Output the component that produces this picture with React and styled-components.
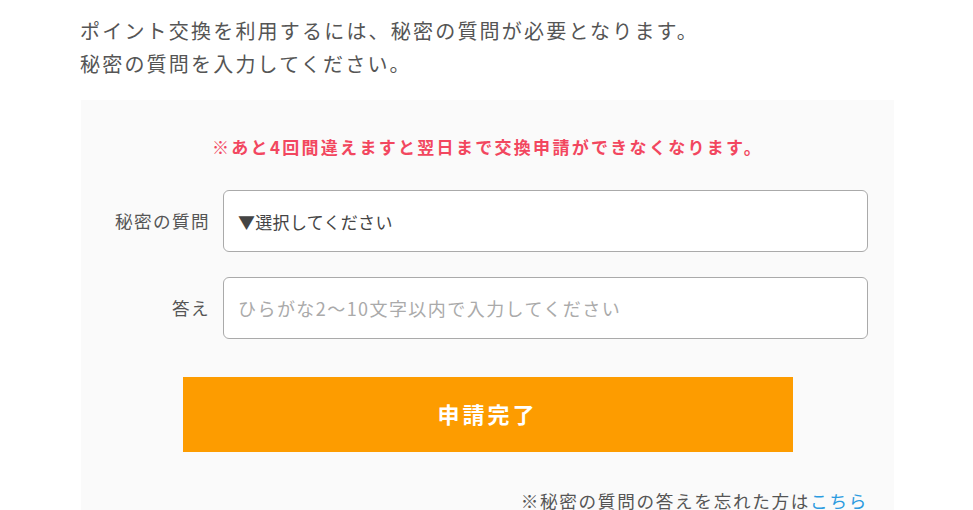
import React, { useState } from 'react';
import styled, { createGlobalStyle } from 'styled-components';

const GlobalStyle = createGlobalStyle`
  body {
    margin: 0;
    background: #fff;
    color: #555;
    font-family: "Noto Sans CJK JP", "Noto Sans", sans-serif;
    letter-spacing: 0.08em;
  }
`;

const questions = [
  '母親の旧姓は？',
  '初めて飼ったペットの名前は？',
  '卒業した小学校の名前は？',
  '好きな食べ物は？',
];

const SecretQuestion = () => {
  const [question, setQuestion] = useState('');
  const [answer, setAnswer] = useState('');

  return (
    <Content>
      <Intro>
        ポイント交換を利用するには、秘密の質問が必要となります。
        <br />
        秘密の質問を入力してください。
      </Intro>
      <Panel>
        <Warning>※あと4回間違えますと翌日まで交換申請ができなくなります。</Warning>
        <Row>
          <Label htmlFor="question">秘密の質問</Label>
          <Select
            id="question"
            value={question}
            onChange={(e) => setQuestion(e.target.value)}
          >
            <option value="">▼選択してください</option>
            {questions.map((q) => (
              <option key={q} value={q}>{q}</option>
            ))}
          </Select>
        </Row>
        <Row>
          <Label htmlFor="answer">答え</Label>
          <Input
            id="answer"
            type="text"
            placeholder="ひらがな2～10文字以内で入力してください"
            value={answer}
            onChange={(e) => setAnswer(e.target.value)}
          />
        </Row>
        <Button type="button">申請完了</Button>
        <Note>
          ※秘密の質問の答えを忘れた方は<Link href="#">こちら</Link>
        </Note>
      </Panel>
    </Content>
  );
};

const Content = styled.div`
  width: 813px;
  margin-left: 81px;
  padding-top: 14px;
`;

const Intro = styled.p`
  margin: 0 0 20px -1px;
  font-size: 20px;
  line-height: 33px;
  letter-spacing: 2.2px;
`;

const Panel = styled.div`
  background: #fafafa;
  padding: 34px 26px 20px;
  display: flex;
  flex-direction: column;
`;

const Warning = styled.p`
  margin: 0 0 31px;
  text-align: center;
  color: #f2475f;
  font-weight: bold;
  font-size: 17px;
  line-height: 25px;
  letter-spacing: 2.3px;
`;

const Row = styled.div`
  display: flex;
  align-items: center;
  gap: 13px;
  margin-bottom: 25px;
`;

const Label = styled.label`
  width: 103px;
  flex-shrink: 0;
  text-align: right;
  font-size: 17.6px;
  letter-spacing: 1.4px;
  padding-bottom: 2px;
`;

const field = `
  flex: 1;
  height: 62px;
  box-sizing: border-box;
  border: 1px solid #aaa;
  border-radius: 6px;
  background: #fff;
  padding: 0 14px;
  font-family: "Noto Sans CJK JP", "Noto Sans", sans-serif;
  color: #444;
  outline: none;
`;

const Select = styled.select`
  ${field}
  appearance: none;
  font-size: 17px;
  letter-spacing: 0.3px;
`;

const Input = styled.input`
  ${field}
  font-size: 18px;
  letter-spacing: 0.08em;
  &::placeholder {
    color: #aaa;
  }
`;

const Button = styled.button`
  align-self: center;
  width: 610px;
  height: 75px;
  margin-top: 13px;
  padding: 0 0 4px;
  border: none;
  background: #fd9c00;
  color: #fff;
  font-family: "Noto Sans CJK JP", "Noto Sans", sans-serif;
  font-weight: bold;
  font-size: 22px;
  letter-spacing: 3px;
  cursor: pointer;
`;

const Note = styled.p`
  margin: 36px 0 0;
  text-align: right;
  font-size: 17.6px;
  line-height: 26px;
  letter-spacing: 1.7px;
`;

const Link = styled.a`
  color: #2b9be0;
  text-decoration: none;
`;

export default function App() {
  return (
    <>
      <GlobalStyle />
      <SecretQuestion />
    </>
  );
}
